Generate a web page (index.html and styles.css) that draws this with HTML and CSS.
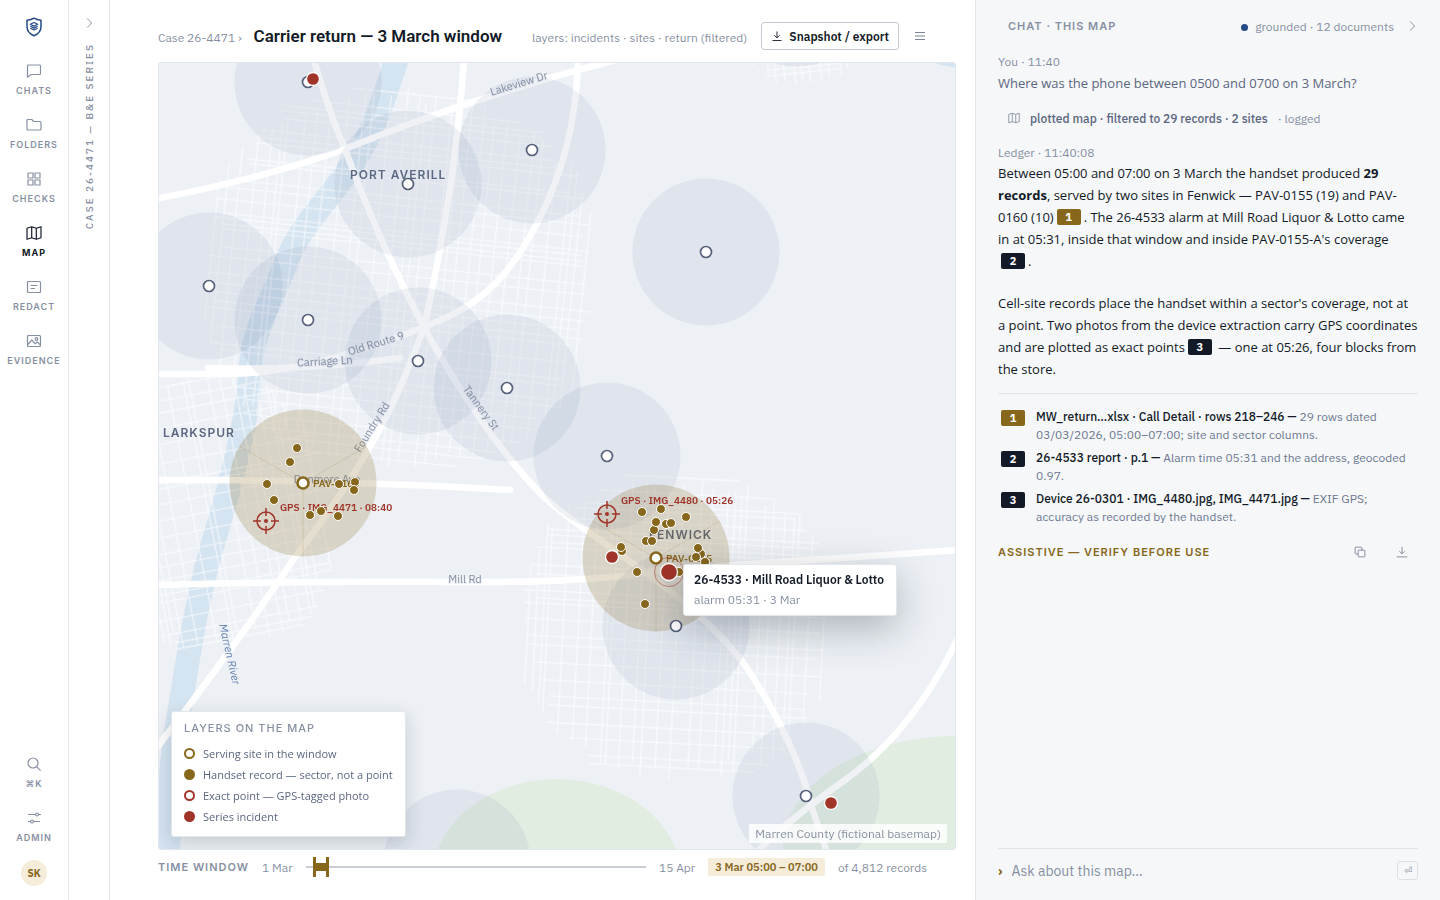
FILE: index.html
```html
<!DOCTYPE html>
<html lang="en">

<head>
  <meta charset="utf-8">
  <title>Carrier return — 3 March window</title>
  <link rel="stylesheet" href="styles.css">
</head>

<body>
  <div class="app">
    <nav class="rail">
      <a class="logo" href="#" aria-label="Home">
        <svg width="20" height="24" viewBox="0 0 20 24" fill="none" stroke="#234a86" stroke-width="1.5" stroke-linejoin="round">
          <path d="M10 3.2c2 1.300 4.300 1.900 7 2v6.300c0 4.300-2.700 7.500-7 9.300-4.300-1.800-7-5-7-9.300V5.200c2.700-.1 5-.7 7-2z" />
          <path stroke-width="1.200" d="M10 7.500l3.700 1.800-3.700 1.800-3.700-1.800zM6.300 11.300l3.700 1.800 3.700-1.800M6.300 13.200l3.700 1.800 3.700-1.800" />
        </svg>
      </a>
      <a class="rail-item" href="#">
        <svg class="icon" viewBox="0 0 16 16"><path d="M2.500 2h11q1 0 1 1v7.500q0 1-1 1H5.200L1.500 14.200V3q0-1 1-1z" /></svg>
        Chats
      </a>
      <a class="rail-item" href="#">
        <svg class="icon" viewBox="0 0 16 16"><path d="M2 2.500h3.800l1.700 2H14q1 0 1 1V12q0 1-1 1H2q-1 0-1-1V3.500q0-1 1-1z" /></svg>
        Folders
      </a>
      <a class="rail-item" href="#">
        <svg class="icon" viewBox="0 0 16 16"><path d="M2 2h5v5H2zM9 2h5v5H9zM2 9h5v5H2zM9 9h5v5H9z" /></svg>
        Checks
      </a>
      <a class="rail-item active" href="#">
        <svg class="icon" viewBox="0 0 16 16"><path d="M1 3.200l4.700-1.500 4.600 1.500L15 1.700v11.100l-4.700 1.500-4.600-1.500L1 14.300zM5.700 1.700v11.100M10.300 3.200v11.100" /></svg>
        Map
      </a>
      <a class="rail-item" href="#">
        <svg class="icon" viewBox="0 0 16 16"><rect x="1.500" y="2.500" width="13" height="11" rx="1" /><path d="M4.500 6.500h7M4.500 9.500h4.500" /></svg>
        Redact
      </a>
      <a class="rail-item" href="#">
        <svg class="icon" viewBox="0 0 16 16"><rect x="1.500" y="2.500" width="13" height="11" rx="1" /><circle cx="10.500" cy="6" r="1.300" /><path d="M1.800 11.500l4-4.500 3.400 3.800 2-2 3.200 3.200" /></svg>
        Evidence
      </a>
      <div class="rail-foot">
        <button class="rail-item">
          <svg class="icon" viewBox="0 0 16 16"><circle cx="7" cy="7" r="5" /><path d="M10.600 10.600l4 4" /></svg>
          ⌘K
        </button>
        <a class="rail-item" href="#">
          <svg class="icon" viewBox="0 0 16 16"><path d="M2 4.500h7.500M12.500 4.500H15M2 11.500h2.500M7.500 11.500H14" /><circle cx="11" cy="4.500" r="1.500" /><circle cx="6" cy="11.500" r="1.500" /></svg>
          Admin
        </a>
      </div>
      <button class="avatar">SK</button>
    </nav>

    <aside class="case-strip">
      <button class="icon-btn" aria-label="Expand case panel">
        <svg class="icon small" viewBox="0 0 16 16"><path d="M5.500 2l6 6-6 6" /></svg>
      </button>
      <span class="case-name">Case 26-4471 — B&amp;E series</span>
    </aside>

    <main class="main">
      <header class="map-header">
        <a class="crumb" href="#">Case 26-4471 ›</a>
        <h1>Carrier return — 3 March window</h1>
        <span class="layers-note">layers: incidents · sites · return (filtered)</span>
        <button class="export-btn">
          <svg class="icon small" viewBox="0 0 16 16"><path d="M8 2v8.500M4.500 7L8 10.500 11.500 7M2 14h12" /></svg>
          Snapshot / export
        </button>
        <button class="icon-btn" aria-label="Menu">
          <svg class="icon" viewBox="0 0 16 16"><path d="M3 4.500h10M3 8h10M3 11.500h10" /></svg>
        </button>
      </header>

      <section class="map">
        <svg class="basemap" viewBox="159 63 796 786" preserveAspectRatio="xMinYMin slice">
          <ellipse class="park" cx="557" cy="880" rx="125" ry="101" />
          <ellipse class="park" cx="955" cy="848" rx="172" ry="112" />
          <ellipse class="water" cx="966" cy="48" rx="46" ry="20" />
          <path class="river" d="M398 55C385 95 375 130 352 165S300 225 285 265S252 330 250 375S232 480 214 540S188 660 178 720S170 800 168 860" />

          <g id="streets"></g>

          <g class="roads">
            <path d="M155 199Q265 178 345 149Q475 96 615 60" />
            <path d="M314 60Q330 115 345 149Q380 245 424 327C455 385 500 452 540 493S690 590 745 665Q795 740 812 808L828 855" />
            <path d="M464 60Q455 190 424 327C400 395 370 460 295 557Q240 640 155 750" />
            <path d="M578 60C576 150 545 215 517 257S455 315 424 327S310 373 230 374L155 374" />
            <path d="M208 368Q305 371 400 358" />
            <path d="M155 480Q320 479 510 490" />
            <path d="M155 585Q300 581 450 582T660 570L960 550" />
            <path d="M960 634Q915 730 845 780T755 855" />
          </g>

          <g class="places">
            <text x="350" y="179">PORT AVERILL</text>
            <text x="163" y="437">LARKSPUR</text>
            <text x="649" y="539">FENWICK</text>
          </g>
          <g class="street-names">
            <text transform="translate(520 87) rotate(-17)">Lakeview Dr</text>
            <text transform="translate(377 347) rotate(-17)">Old Route 9</text>
            <text transform="translate(325 365) rotate(-3)">Carriage Ln</text>
            <text transform="translate(375 429) rotate(-58)">Foundry Rd</text>
            <text transform="translate(478 410) rotate(54)">Tannery St</text>
            <text transform="translate(327 483)">Dunmore Ave</text>
            <text transform="translate(465 583)">Mill Rd</text>
            <text class="river-name" transform="translate(226 655) rotate(77)">Marren River</text>
          </g>

          <g id="coverage"></g>
          <g id="sites"></g>

          <g class="site-names">
            <text x="313" y="487">PAV-0160</text>
            <text x="666" y="562">PAV-0155</text>
          </g>
          <g class="photo-names">
            <text x="280" y="511">GPS · IMG_4471 · 08:40</text>
            <text x="621" y="504">GPS · IMG_4480 · 05:26</text>
          </g>
          <g id="records"></g>
          <g id="photos"></g>
          <circle class="halo" cx="669" cy="572" r="14.500" />
          <g id="incidents"></g>
        </svg>

        <div class="tooltip">
          <strong>26-4533 · Mill Road Liquor &amp; Lotto</strong>
          <span>alarm 05:31 · 3 Mar</span>
        </div>

        <div class="legend">
          <h2>Layers on the map</h2>
          <ul>
            <li><i class="key ring"></i>Serving site in the window</li>
            <li><i class="key"></i>Handset record — sector, not a point</li>
            <li><i class="key ring red"></i>Exact point — GPS-tagged photo</li>
            <li><i class="key red"></i>Series incident</li>
          </ul>
        </div>

        <span class="attribution">Marren County (fictional basemap)</span>
      </section>

      <footer class="time-window">
        <span class="time-title">Time window</span>
        <span>1 Mar</span>
        <div class="slider">
          <div class="slider-fill"></div>
          <input type="range" min="0" max="1000" value="22" aria-label="Window start">
          <input type="range" min="0" max="1000" value="62" aria-label="Window end">
        </div>
        <span>15 Apr</span>
        <span class="time-value">3 Mar 05:00 – 07:00</span>
        <span>of 4,812 records</span>
      </footer>
    </main>

    <aside class="chat">
      <header class="chat-header">
        <h2>Chat · this map</h2>
        <span class="grounded">grounded · 12 documents</span>
        <button class="icon-btn" aria-label="Collapse chat">
          <svg class="icon small" viewBox="0 0 16 16"><path d="M5.500 2l6 6-6 6" /></svg>
        </button>
      </header>

      <p class="who">You · 11:40</p>
      <p class="question">Where was the phone between 0500 and 0700 on 3 March?</p>

      <div class="action">
        <svg class="icon small" viewBox="0 0 16 16"><path d="M1 3.200l4.700-1.500 4.600 1.500L15 1.700v11.100l-4.700 1.500-4.600-1.500L1 14.300zM5.700 1.700v11.100M10.300 3.200v11.100" /></svg>
        <strong>plotted map · filtered to 29 records · 2 sites</strong>
        <span>· logged</span>
      </div>

      <p class="who">Ledger · 11:40:08</p>
      <div class="answer">
        <p>Between 05:00 and 07:00 on 3 March the handset produced <b>29 records</b>, served by two sites in Fenwick — PAV-0155 (19) and PAV-0160 (10)<a class="cite gold" href="#src1">1</a>. The 26-4533 alarm at Mill Road Liquor &amp; Lotto came in at 05:31, inside that window and inside PAV-0155-A's coverage<a class="cite" href="#src2">2</a>.</p>
        <p>Cell-site records place the handset within a sector's coverage, not at a point. Two photos from the device extraction carry GPS coordinates and are plotted as exact points<a class="cite" href="#src3">3</a> — one at 05:26, four blocks from the store.</p>
      </div>

      <ol class="sources">
        <li id="src1"><span class="cite gold">1</span>
          <p><strong>MW_return…xlsx · Call Detail · rows 218–246 —</strong> 29 rows dated 03/03/2026, 05:00–07:00; site and sector columns.</p>
        </li>
        <li id="src2"><span class="cite">2</span>
          <p><strong>26-4533 report · p.1 —</strong> Alarm time 05:31 and the address, geocoded 0.97.</p>
        </li>
        <li id="src3"><span class="cite">3</span>
          <p><strong>Device 26-0301 · IMG_4480.jpg, IMG_4471.jpg —</strong> EXIF GPS; accuracy as recorded by the handset.</p>
        </li>
      </ol>

      <div class="verify">
        <span>Assistive — verify before use</span>
        <button class="icon-btn" aria-label="Copy">
          <svg class="icon small" viewBox="0 0 16 16"><path d="M2.500 1.500h7q1 0 1 1v7q0 1-1 1h-7q-1 0-1-1v-7q0-1 1-1z" /><path class="over" d="M6.500 5.500h7q1 0 1 1v7q0 1-1 1h-7q-1 0-1-1v-7q0-1 1-1z" /></svg>
        </button>
        <button class="icon-btn" aria-label="Download">
          <svg class="icon small" viewBox="0 0 16 16"><path d="M8 1v9.500M4.500 7L8 10.500 11.500 7M1 14.500h14" /></svg>
        </button>
      </div>

      <form class="ask">
        <label for="ask-input">›</label>
        <input id="ask-input" type="text" placeholder="Ask about this map…">
        <button type="button" aria-label="Send">⏎</button>
      </form>
    </aside>
  </div>

  <script>
    const NS = "http://www.w3.org/2000/svg";

    function draw(parent, tag, attrs) {
      const el = document.createElementNS(NS, tag);
      for (const key in attrs) {
        el.setAttribute(key, attrs[key]);
      }
      document.getElementById(parent).appendChild(el);
    }

    // Small seeded generator so the town streets are the same on every load
    let seed = 7;
    function rand() {
      seed = (seed * 16807) % 2147483647;
      return seed / 2147483647;
    }

    // A town is a rotated grid with ragged ends, cut to an ellipse
    function drawTown(cx, cy, rx, ry, angle, step) {
      let d = "";
      for (let x = -rx + 8; x < rx - 6; x += step * (0.3 + rand())) {
        const h = ry * Math.pow(1 - (x * x) / (rx * rx), 0.35);
        d += "M" + x.toFixed(1) + " " + (-h + rand() * 18).toFixed(1) + "V" + (h - rand() * 18).toFixed(1);
      }
      for (let y = -ry + 8; y < ry - 6; y += step * (0.3 + rand())) {
        const w = rx * Math.pow(1 - (y * y) / (ry * ry), 0.35);
        d += "M" + (-w + rand() * 18).toFixed(1) + " " + y.toFixed(1) + "H" + (w - rand() * 18).toFixed(1);
      }
      draw("streets", "path", { d: d, transform: "translate(" + cx + " " + cy + ") rotate(" + angle + ")" });
    }

    drawTown(400, 278, 198, 192, 6, 14);
    drawTown(212, 512, 128, 140, -11, 15);
    drawTown(678, 626, 158, 156, 3, 15);
    drawTown(800, 36, 58, 58, -6, 13);

    const sites = [
      [308, 82], [408, 184], [532, 150], [706, 252], [209, 286], [308, 320], [418, 361],
      [507, 388], [607, 456], [676, 626], [806, 796], [457, 863], [797, -7]
    ];
    const serving = [[303, 483], [656, 558]];

    sites.forEach(([x, y]) => {
      draw("coverage", "circle", { class: "cover", cx: x, cy: y, r: 73.5 });
      draw("sites", "circle", { class: "site", cx: x, cy: y, r: 5.5 });
    });

    serving.forEach(([x, y]) => {
      draw("coverage", "circle", { class: "cover serving", cx: x, cy: y, r: 73.5 });
      // three sectors
      draw("coverage", "path", { class: "sector", d: "M" + x + " " + y + "v73.500M" + x + " " + y + "l-63.600-36.700M" + x + " " + y + "l63.600-36.700" });
      draw("sites", "circle", { class: "site serving", cx: x, cy: y, r: 5.5 });
    });

    const records = [
      [297, 448], [290, 462], [267, 484], [274, 500], [339, 484], [355, 482], [354, 490], [310, 515],
      [321, 511], [338, 516],
      [642, 512], [661, 509], [686, 517], [654, 530], [656, 522], [666, 524], [671, 523],
      [646, 541], [652, 541], [622, 551], [621, 547], [637, 572], [645, 604],
      [701, 554], [698, 548], [696, 557], [705, 562], [679, 572]
    ];
    records.forEach(([x, y]) => draw("records", "circle", { class: "record", cx: x, cy: y, r: 4.5 }));

    [[266, 521], [607, 514]].forEach(([x, y]) => {
      draw("photos", "circle", { class: "photo", cx: x, cy: y, r: 9 });
      draw("photos", "path", { class: "photo", d: "M" + x + " " + (y - 13) + "v8m0 10v8M" + (x - 13) + " " + y + "h8m10 0h8" });
      draw("photos", "circle", { class: "photo-dot", cx: x, cy: y, r: 2 });
    });

    [[313, 79, 6.5], [612, 557, 6.5], [831, 803, 6.5], [669, 572, 8.5]].forEach(([x, y, r]) => {
      draw("incidents", "circle", { class: "incident", cx: x, cy: y, r: r });
    });
  </script>
</body>

</html>
```

FILE: styles.css
```css
* {
  box-sizing: border-box;
}

body {
  margin: 0;
  font-family: "IBM Plex Sans", Roboto, "Liberation Sans", sans-serif;
  font-size: 12px;
  color: #131a27;
  background: #fff;
}

h1, h2, p, ul, ol {
  margin: 0;
  padding: 0;
}

ul, ol {
  list-style: none;
}

a {
  color: inherit;
  text-decoration: none;
}

button {
  font: inherit;
  color: inherit;
  border: none;
  background: none;
  padding: 0;
  cursor: pointer;
}

strong {
  font-weight: 500;
}

.app {
  display: grid;
  grid-template-columns: 69px 41px 1fr 465px;
  height: 100vh;
}

.icon {
  width: 16px;
  height: 16px;
  flex: none;
  fill: none;
  stroke: currentColor;
  stroke-width: 1.2;
  stroke-linejoin: round;
}

.icon.small {
  width: 12px;
  height: 12px;
}

.icon-btn {
  display: flex;
  color: #7d8698;
}

/* left rail */
.rail {
  display: flex;
  flex-direction: column;
  align-items: center;
  padding: 15px 0 14px;
  border-right: 1px solid #e3e6ea;
}

.logo {
  height: 24px;
  margin-bottom: 24px;
}

.rail-item {
  display: flex;
  flex-direction: column;
  align-items: center;
  gap: 6px;
  height: 34px;
  margin-bottom: 20px;
  font-family: Inter, sans-serif;
  font-size: 9px;
  line-height: 12px;
  font-weight: 600;
  letter-spacing: 1px;
  text-transform: uppercase;
  color: #8790a2;
}

.rail-item.active {
  color: #131a27;
  font-weight: 700;
}

.rail-foot {
  display: flex;
  flex-direction: column;
  align-items: center;
  margin: auto 0 -4px;
}

.avatar {
  width: 26px;
  height: 26px;
  border-radius: 50%;
  background: #f5ecd9;
  color: #87671c;
  font-size: 10px;
  font-weight: 700;
}

/* collapsed case panel */
.case-strip {
  display: flex;
  flex-direction: column;
  align-items: center;
  gap: 14px;
  padding-top: 17px;
  border-right: 1px solid #e3e6ea;
}

.case-name {
  writing-mode: vertical-rl;
  transform: rotate(180deg);
  font-size: 10px;
  font-weight: 500;
  letter-spacing: 2px;
  text-transform: uppercase;
  color: #8790a2;
}

/* map column */
.main {
  display: flex;
  flex-direction: column;
  min-width: 0;
  padding: 0 19px 0 48px;
}

.map-header {
  display: flex;
  align-items: center;
  height: 62px;
  padding: 10px 28px 0 0;
  color: #8790a2;
}

.map-header h1 {
  margin: 0 auto 0 12px;
  font-family: Roboto, sans-serif;
  font-size: 17px;
  font-weight: 600;
  color: #131a27;
}

.crumb,
.layers-note {
  padding-top: 3px;
}

.export-btn {
  display: flex;
  align-items: center;
  gap: 6px;
  height: 28px;
  margin: 0 13px 0 14px;
  padding: 0 9px;
  border: 1px solid #c6cbd4;
  border-radius: 3px;
  font-weight: 600;
  color: #131a27;
}

.map {
  position: relative;
  flex: 1;
  min-height: 0;
  overflow: hidden;
  border: 1px solid #e1e5ec;
  border-radius: 3px;
  background: #edf1f6;
}

.basemap {
  display: block;
  width: 100%;
  height: 100%;
}

.park {
  fill: #e2ede2;
}

.water {
  fill: #d5e4f1;
}

.river {
  fill: none;
  stroke: #d5e4f1;
  stroke-width: 24;
}

#streets {
  fill: none;
  stroke: #fff;
  stroke-width: 1.3;
  opacity: 0.6;
}

.roads {
  fill: none;
  stroke: #fff;
  stroke-width: 6.5;
  stroke-linecap: round;
}

.places {
  font-family: Inter, sans-serif;
  font-size: 12px;
  font-weight: 600;
  letter-spacing: 1px;
  fill: #5b6680;
}

.street-names {
  font-size: 11px;
  text-anchor: middle;
  fill: #8790a2;
  stroke: #eef1f6;
  stroke-width: 2;
  paint-order: stroke;
}

.river-name {
  font-style: italic;
  fill: #5f7fae;
}

.cover {
  fill: #7080a8;
  fill-opacity: 0.11;
}

.cover.serving {
  fill: #8a6a1f;
  fill-opacity: 0.22;
}

.sector {
  fill: none;
  stroke: #8a6a1f;
  stroke-opacity: 0.15;
}

.site {
  fill: #fff;
  stroke: #56607a;
  stroke-width: 1.7;
}

.site.serving {
  stroke: #87671c;
  stroke-width: 2.5;
}

.site-names,
.photo-names {
  font-size: 10px;
  font-weight: 600;
  fill: #87671c;
}

.photo-names {
  fill: #a13429;
}

.record {
  fill: #87671c;
  stroke: #fff;
  stroke-width: 1;
}

.photo {
  fill: none;
  stroke: #a13429;
  stroke-width: 1.5;
}

.photo-dot {
  fill: #a13429;
}

.incident {
  fill: #a13429;
  stroke: #fff;
  stroke-width: 1.3;
}

.halo {
  fill: none;
  stroke: #a13429;
  stroke-opacity: 0.5;
}

.tooltip {
  position: absolute;
  left: 524px;
  top: 501px;
  display: flex;
  flex-direction: column;
  padding: 5px 12px 5px 10px;
  border: 1px solid #e3e6ea;
  border-radius: 3px;
  background: #fff;
  box-shadow: 0 12px 40px rgba(19, 26, 39, 0.3);
  line-height: 20px;
  white-space: nowrap;
  color: #8790a2;
}

.tooltip strong {
  font-weight: 600;
  color: #131a27;
}

.legend {
  position: absolute;
  left: 12px;
  bottom: 12px;
  padding: 8px 12px 9px;
  border: 1px solid #e3e6ea;
  border-radius: 3px;
  background: #fff;
  box-shadow: 0 6px 20px rgba(19, 26, 39, 0.18);
  color: #5b6680;
}

.legend h2,
.time-title,
.chat-header h2,
.verify {
  font-family: Inter, sans-serif;
  font-size: 11px;
  font-weight: 600;
  letter-spacing: 1px;
  text-transform: uppercase;
  color: #8790a2;
}

.legend h2 {
  margin-bottom: 7px;
  font-weight: 500;
  line-height: 16px;
}

.legend li {
  display: flex;
  align-items: center;
  gap: 8px;
  font-family: "Open Sans", sans-serif;
  font-size: 11px;
  line-height: 21px;
}

.key {
  width: 11px;
  height: 11px;
  border: 2px solid #87671c;
  border-radius: 50%;
  background: #87671c;
}

.key.red {
  border-color: #a13429;
  background: #a13429;
}

.key.ring {
  background: #fff;
}

.attribution {
  position: absolute;
  right: 8px;
  bottom: 6px;
  padding: 0 6px;
  background: rgba(255, 255, 255, 0.8);
  line-height: 19px;
  color: #8790a2;
}

.time-window {
  display: flex;
  align-items: center;
  gap: 13px;
  height: 50px;
  padding: 0 29px 16px 0;
  color: #8790a2;
}

.time-value {
  padding: 0 7px;
  border-radius: 2px;
  background: #f5ecd9;
  font-size: 11px;
  font-weight: 600;
  line-height: 18px;
  color: #87671c;
}

.slider {
  position: relative;
  flex: 1;
  height: 20px;
}

.slider::before {
  content: "";
  position: absolute;
  left: 0;
  right: 0;
  top: 9px;
  height: 2px;
  background: #c9cdd6;
}

.slider-fill {
  position: absolute;
  left: 2.2%;
  width: 4%;
  top: 6px;
  height: 8px;
  background: #87671c;
}

.slider input {
  position: absolute;
  left: 0;
  top: 0;
  width: 100%;
  height: 20px;
  margin: 0;
  background: none;
  appearance: none;
  pointer-events: none;
}

.slider input::-webkit-slider-thumb {
  appearance: none;
  width: 3px;
  height: 20px;
  background: #87671c;
  pointer-events: auto;
}

/* chat column */
.chat {
  display: flex;
  flex-direction: column;
  min-height: 0;
  padding: 16px 22px 14px;
  border-left: 1px solid #e3e6ea;
  background: #f5f7f9;
}

.chat-header {
  display: flex;
  align-items: center;
  height: 20px;
  margin-bottom: 2px;
  padding-left: 10px;
  color: #8790a2;
}

.chat-header h2 {
  flex: 1;
}

.chat-header .icon-btn {
  margin-left: 12px;
}

.grounded::before {
  content: "";
  display: inline-block;
  width: 7px;
  height: 7px;
  margin-right: 7px;
  border-radius: 50%;
  background: #234a86;
}

.who {
  margin-top: 16px;
  line-height: 16px;
  color: #8790a2;
}

.question,
.answer {
  font-family: "Open Sans", sans-serif;
  font-size: 13px;
  line-height: 22px;
}

.question {
  margin-top: 2px;
  color: #5b6680;
}

.action {
  display: flex;
  align-items: center;
  gap: 10px;
  height: 32px;
  margin: 8px 0 -5px;
  padding-left: 10px;
  color: #8790a2;
}

.action strong {
  color: #5b6680;
}

.answer {
  margin-top: 1px;
}

.answer p + p {
  margin-top: 20px;
}

.cite {
  display: inline-block;
  width: 24px;
  height: 16px;
  border-radius: 2px;
  background: #131a27;
  color: #fff;
  font-family: "IBM Plex Sans", Roboto, sans-serif;
  font-size: 11px;
  font-weight: 700;
  line-height: 16px;
  text-align: center;
}

.cite.gold {
  background: #87671c;
}

.answer .cite {
  margin: 0 3px;
  vertical-align: 1px;
}

.sources {
  display: flex;
  flex-direction: column;
  gap: 5px;
  margin-top: 13px;
  padding-top: 14px;
  border-top: 1px solid #e1e4e9;
  line-height: 18px;
  color: #6d7790;
}

.sources li {
  display: flex;
  gap: 11px;
}

.sources .cite {
  flex: none;
  margin: 2px 0 0 3px;
}

.sources strong {
  color: #131a27;
}

.verify {
  display: flex;
  align-items: center;
  gap: 30px;
  margin-top: 19px;
  padding-right: 10px;
  color: #87671c;
}

.verify span {
  flex: 1;
}

.over {
  fill: #f5f7f9;
}

.ask {
  display: flex;
  align-items: center;
  gap: 9px;
  height: 38px;
  margin-top: auto;
  padding-top: 6px;
  border-top: 1px solid #e1e4e9;
}

.ask label {
  font-size: 14px;
  font-weight: 700;
  color: #87671c;
}

.ask input {
  flex: 1;
  min-width: 0;
  padding: 0;
  border: none;
  outline: none;
  background: none;
  font: inherit;
  font-size: 14px;
}

.ask input::placeholder {
  color: #8790a2;
}

.ask button {
  width: 21px;
  height: 19px;
  border: 1px solid #dde1e7;
  border-radius: 3px;
  font-size: 10px;
  color: #8790a2;
}
```
